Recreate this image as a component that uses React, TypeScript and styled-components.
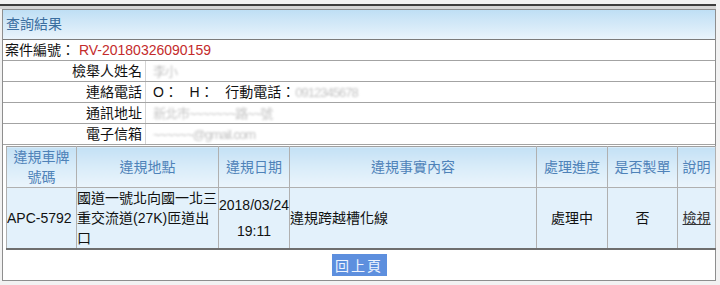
import React from "react";
import styled, { createGlobalStyle } from "styled-components";

const GlobalStyle = createGlobalStyle`
  html, body {
    margin: 0;
    padding: 0;
    background: #f2f2f2;
  }
  body {
    font-family: "Liberation Sans", "Noto Sans CJK TC", Arial, sans-serif;
    font-size: 14px;
    color: #111;
  }
`;

const Page = styled.div`
  padding-top: 4px;
  width: 716px;
`;

const TopRule = styled.div`
  height: 2px;
  background: #3d3d3d;
  border-bottom: 3px solid #d6d6d6;
`;

const Panel = styled.div`
  margin-left: 2px;
  border: 1px solid #8e8e8e;
  background: #fff;
`;

const PanelTitle = styled.div`
  height: 29px;
  line-height: 29px;
  padding-left: 3px;
  border-bottom: 1px solid #7b7b7b;
  background: linear-gradient(to bottom, #bfdff5 0%, #d6eaf8 55%, #e9f4fc 100%);
  color: #3a6d9f;
  font-size: 14px;
`;

const CaseRow = styled.div`
  height: 20px;
  line-height: 20px;
  padding-left: 2px;
  border-bottom: 1px solid #a3a3a3;
  white-space: pre;
`;

const CaseNo = styled.span`
  color: #c42b2b;
`;

const InfoRow = styled.div`
  display: grid;
  grid-template-columns: 143px 1fr;
  height: 20px;
  line-height: 20px;
  border-bottom: 1px solid #a3a3a3;
`;

const InfoLabel = styled.div`
  text-align: right;
  padding-right: 3px;
  border-right: 1px solid #d4d4d4;
`;

const InfoValue = styled.div`
  padding-left: 7px;
  white-space: pre;
  overflow: hidden;
`;

const Masked = styled.span`
  color: #c4c4c4;
  filter: blur(0.9px);
  letter-spacing: -1px;
  font-size: 13px;
`;

const Table = styled.table`
  margin: 1px 0 0 3px;
  width: 709px;
  border-collapse: collapse;
  table-layout: fixed;
  font-size: 14px;
`;

const HeadCell = styled.th`
  height: 40px;
  padding: 0;
  border: 1px solid #b0b0b0;
  border-top-color: #a0a0a0;
  background: linear-gradient(to bottom, #c4e1f5 0%, #d9ecf9 50%, #ebf5fc 100%);
  color: #4e82b8;
  font-weight: normal;
  line-height: 20px;
  text-align: center;
  vertical-align: middle;
`;

const BodyRow = styled.tr`
  background: #e3f1fb;
  border-bottom: 2px solid #6e6e6e;
`;

const Cell = styled.td<{ $align?: "left" | "center"; $lh?: number; $nowrap?: boolean }>`
  height: 60px;
  padding: 0;
  border-left: 1px solid #b0b0b0;
  border-right: 1px solid #b0b0b0;
  line-height: ${(p) => p.$lh ?? 20}px;
  text-align: ${(p) => p.$align ?? "left"};
  vertical-align: middle;
  white-space: ${(p) => (p.$nowrap ? "nowrap" : "normal")};
  word-break: break-all;
  overflow: hidden;
`;

const ViewLink = styled.a`
  color: #333;
  text-decoration: underline;
  cursor: pointer;
`;

const Footer = styled.div`
  height: 30px;
  display: flex;
  align-items: center;
  justify-content: center;
`;

const BackButton = styled.button`
  width: 55px;
  height: 22px;
  padding: 0;
  border: none;
  background: #5d8fde;
  color: #eef4ff;
  font-family: "Liberation Sans", "Noto Sans CJK TC", sans-serif;
  font-size: 14px;
  letter-spacing: 2px;
  cursor: pointer;
`;

const columns: { w: number; label: React.ReactNode; key: string }[] = [
  { w: 70, key: "plate", label: <>違規車牌<br />號碼</> },
  { w: 142, key: "place", label: "違規地點" },
  { w: 71, key: "date", label: "違規日期" },
  { w: 247, key: "fact", label: "違規事實內容" },
  { w: 71, key: "status", label: "處理進度" },
  { w: 70, key: "ticket", label: "是否製單" },
  { w: 38, key: "note", label: "說明" },
];

export default function App() {
  return (
    <Page>
      <GlobalStyle />
      <TopRule />
      <Panel>
        <PanelTitle>查詢結果</PanelTitle>
        <CaseRow>
          案件編號： <CaseNo>RV-20180326090159</CaseNo>
        </CaseRow>
        <InfoRow>
          <InfoLabel>檢舉人姓名</InfoLabel>
          <InfoValue>
            <Masked>李小</Masked>
          </InfoValue>
        </InfoRow>
        <InfoRow>
          <InfoLabel>連絡電話</InfoLabel>
          <InfoValue>
            {"O：   H：   行動電話："}
            <Masked>0912345678</Masked>
          </InfoValue>
        </InfoRow>
        <InfoRow>
          <InfoLabel>通訊地址</InfoLabel>
          <InfoValue>
            <Masked>新北市~~~~~~~路~~號</Masked>
          </InfoValue>
        </InfoRow>
        <InfoRow>
          <InfoLabel>電子信箱</InfoLabel>
          <InfoValue>
            <Masked>~~~~~~@gmail.com</Masked>
          </InfoValue>
        </InfoRow>
        <Table>
          <colgroup>
            {columns.map((c) => (
              <col key={c.key} style={{ width: c.w }} />
            ))}
          </colgroup>
          <thead>
            <tr>
              {columns.map((c) => (
                <HeadCell key={c.key}>{c.label}</HeadCell>
              ))}
            </tr>
          </thead>
          <tbody>
            <BodyRow>
              <Cell>APC-5792</Cell>
              <Cell>國道一號北向國一北三重交流道(27K)匝道出口</Cell>
              <Cell $align="center" $lh={26} $nowrap>
                2018/03/24
                <br />
                19:11
              </Cell>
              <Cell>違規跨越槽化線</Cell>
              <Cell $align="center">處理中</Cell>
              <Cell $align="center">否</Cell>
              <Cell $align="center">
                <ViewLink>檢視</ViewLink>
              </Cell>
            </BodyRow>
          </tbody>
        </Table>
        <Footer>
          <BackButton>回上頁</BackButton>
        </Footer>
      </Panel>
    </Page>
  );
}
